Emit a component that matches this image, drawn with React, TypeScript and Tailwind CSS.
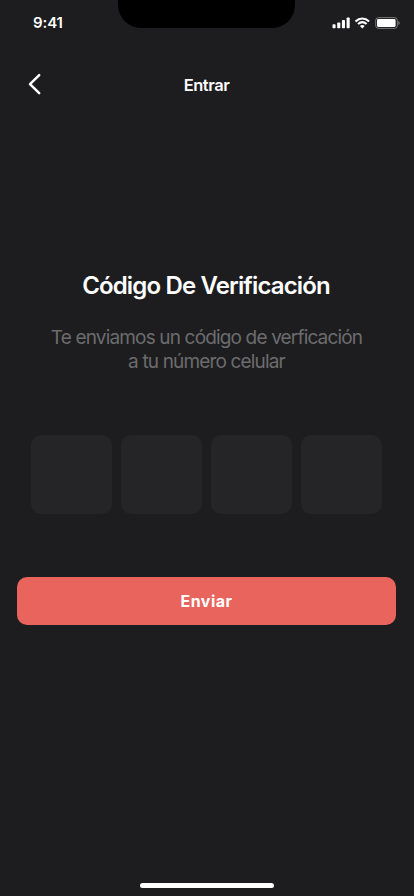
import React from 'react';

const StatusBar: React.FC = () => {
  return (
    <div className="flex h-11 items-start justify-between">
      <div className="w-[118px] pl-[33px] pt-[13px] text-[15px] leading-5 font-semibold tracking-[-0.1px]">
        9:41
      </div>
      <div className="h-7 w-[177px] rounded-b-[23px] bg-black" />
      <div className="flex w-[119px] items-center pl-[37px] pt-[17px]">
        <svg width="18" height="12" viewBox="0 0 18 12" fill="currentColor">
          <rect x="0.5" y="7.3" width="3.1" height="4" rx="0.8" />
          <rect x="5.2" y="5.4" width="3.1" height="5.9" rx="0.8" />
          <rect x="9.9" y="3" width="3.1" height="8.3" rx="0.8" />
          <rect x="14.6" y="0.5" width="3.1" height="10.8" rx="0.8" />
        </svg>
        <svg className="ml-1" width="17" height="12" viewBox="0 0 17 12" fill="none" stroke="currentColor" strokeWidth="2.1">
          <path d="M1.5 4.4C5.5 0.6 11.1 0.6 15.1 4.4" />
          <path d="M4 7.1C6.6 4.7 10 4.7 12.6 7.1" />
          <path d="M5.9 8.9C7.3 7.7 9.3 7.7 10.7 8.9L8.3 11.4Z" fill="currentColor" stroke="none" />
        </svg>
        <svg className="ml-1" width="26" height="12" viewBox="0 0 26 12" fill="none">
          <rect x="0.7" y="0.6" width="21.6" height="10.8" rx="2.8" stroke="white" strokeOpacity="0.4" />
          <rect x="2" y="2.1" width="18.6" height="7.8" rx="1.3" fill="white" />
          <path d="M23.3 4V8C24.1 7.6 24.6 6.9 24.6 6C24.6 5.1 24.1 4.4 23.3 4Z" fill="white" fillOpacity="0.45" />
        </svg>
      </div>
    </div>
  );
};

const Header: React.FC = () => {
  return (
    <header className="grid h-20 grid-cols-3 items-center">
      <button className="pl-7" aria-label="Volver">
        <svg width="14" height="22" viewBox="0 0 14 22" fill="none" stroke="currentColor" strokeWidth="2.5" strokeLinecap="round" strokeLinejoin="round">
          <path d="M11.2 2.2L2 11.2L11.2 20.2" />
        </svg>
      </button>
      <h1 className="pt-0.5 pr-px text-center text-[16.5px] leading-6 font-semibold tracking-[-0.45px]">Entrar</h1>
    </header>
  );
};

const CodeInputs: React.FC = () => {
  return (
    <div className="mt-[61px] flex gap-[9px] pl-[31px]">
      {[0, 1, 2, 3].map((index) => (
        <div key={index} className="h-[79px] w-[81px] rounded-[10px] bg-[#252527]" />
      ))}
    </div>
  );
};

export default function App() {
  return (
    <div className="flex h-[896px] w-[414px] flex-col overflow-hidden bg-[#1d1d1f] font-['Inter',sans-serif] text-white">
      <StatusBar />
      <Header />

      <main className="mt-[146px] flex flex-col">
        <h2 className="pr-0.5 text-center text-2xl font-semibold tracking-[-0.85px] whitespace-nowrap">
          Código De Verificación
        </h2>
        <p className="mt-[24px] pr-px text-center text-[19px] leading-6 font-normal tracking-[-0.84px] whitespace-nowrap text-[#6c6c6e]">
          Te enviamos un código de verficación
          <br />
          a tu número celular
        </p>

        <CodeInputs />

        <button className="mt-[63px] ml-[17px] h-12 w-[379px] rounded-[10px] bg-[#e8645c] text-base font-bold tracking-[0.5px]">
          Enviar
        </button>
      </main>

      <div className="mt-auto mb-2 ml-[140px] h-[5px] w-[134px] rounded-full bg-white" />
    </div>
  );
}
